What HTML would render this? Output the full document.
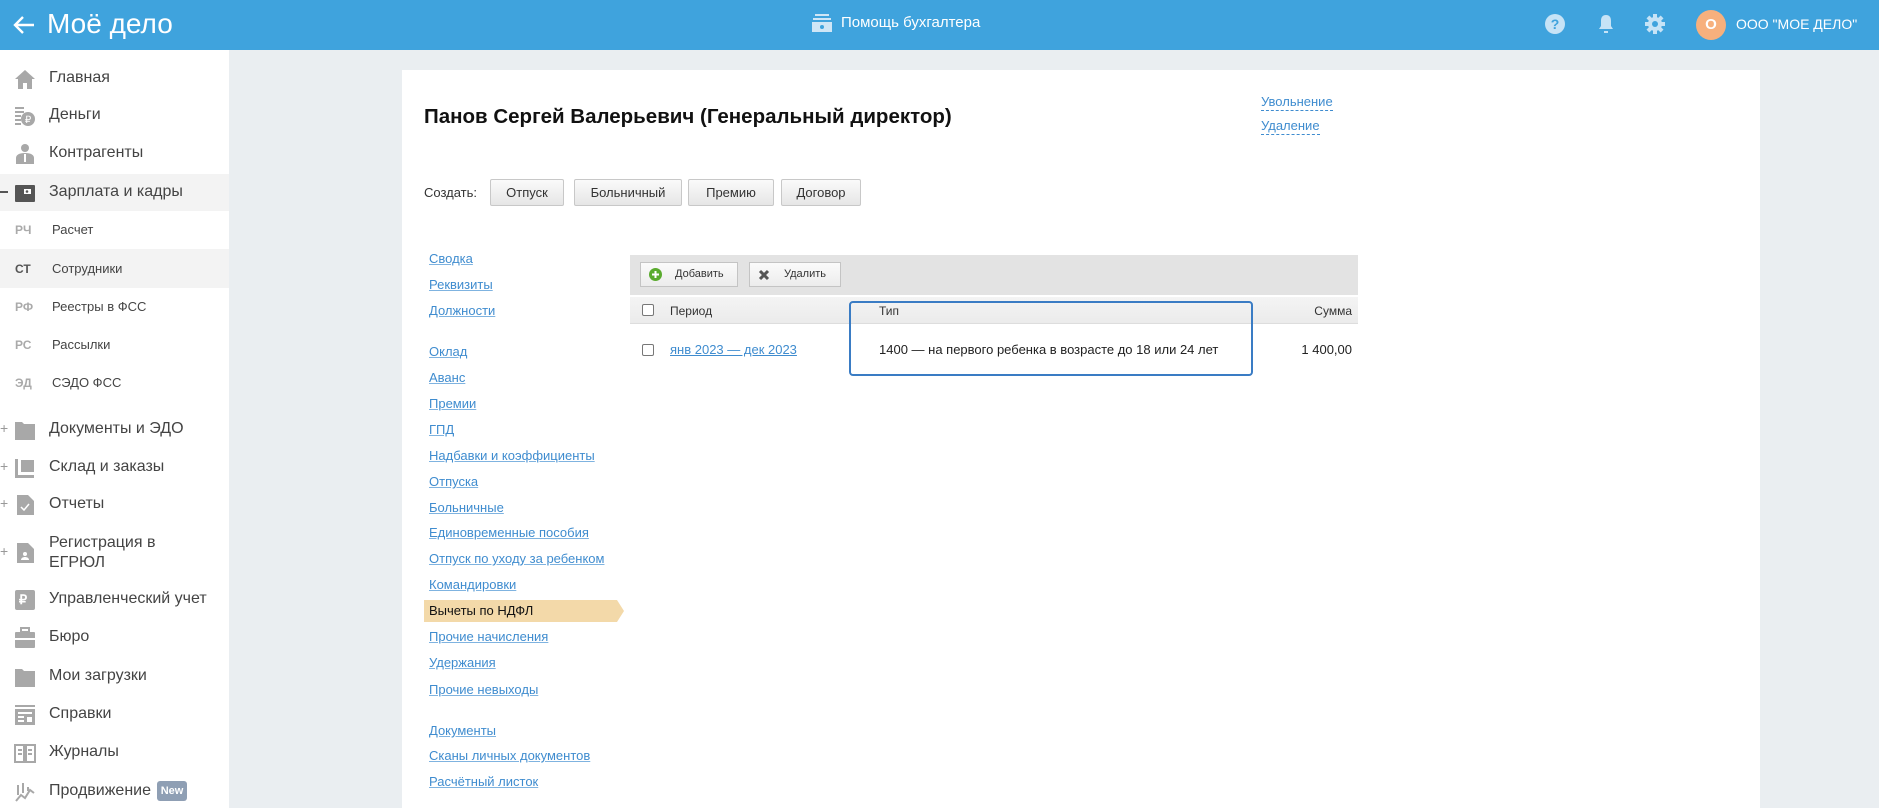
<!DOCTYPE html>
<html><head><meta charset="utf-8"><style>
*{margin:0;padding:0;box-sizing:border-box}
body{width:1879px;height:808px;overflow:hidden;background:#eaeef1;font-family:"Liberation Sans",Arial,sans-serif;position:relative;color:#333}
.abs{position:absolute}
#hdr{left:0;top:0;width:1879px;height:50px;background:#3fa3dd}
#side{left:0;top:50px;width:229px;height:758px;background:#fff}
.it{position:absolute;left:49px;font-size:16px;color:#444;line-height:20px}
.ic{position:absolute;left:14px;width:22px;height:22px}
.sub{position:absolute;left:52px;font-size:13px;color:#444}
.ab{position:absolute;left:15px;font-size:12px;font-weight:bold;color:#aaa}
.pl{position:absolute;left:0;font-size:14px;color:#999}
#card{left:402px;top:70px;width:1358px;height:738px;background:#fff}
.nl{position:absolute;left:429px;font-size:13px;color:#3f8ccf;text-decoration:underline;text-decoration-color:#7fb3e0}
.btn{position:absolute;top:179px;height:27px;border:1px solid #c8c8c8;border-radius:2px;background:linear-gradient(#fafafa,#e6e6e6);font-size:13px;color:#333;text-align:center;line-height:25px}
.tb{position:absolute;top:262px;height:25px;border:1px solid #c4c4c4;background:linear-gradient(#fbfbfb,#ececec);font-size:11px;color:#333;line-height:23px}
.cb{position:absolute;width:12px;height:12px;border:1px solid #777;border-radius:2px;background:#fff}
</style></head><body>
<div id="hdr" class="abs">
 <svg class="abs" style="left:12px;top:13px" width="24" height="24" viewBox="0 0 24 24"><path d="M22 12H3M11 4l-8 8 8 8" stroke="#fff" stroke-width="2.4" fill="none"/></svg>
 <div class="abs" style="left:47px;top:8px;font-size:28px;color:#fff">Моё дело</div>
 <svg class="abs" style="left:811px;top:13px" width="22" height="20" viewBox="0 0 22 20"><rect x="4" y="1" width="14" height="2" fill="#cfe6f6"/><rect x="2" y="5" width="18" height="2" fill="#cfe6f6"/><rect x="1" y="9" width="20" height="10" fill="#cfe6f6"/><circle cx="11" cy="14" r="2" fill="#3fa3dd"/></svg>
 <div class="abs" style="left:841px;top:14px;font-size:15px;color:#fff">Помощь бухгалтера</div>
 <svg class="abs" style="left:1544px;top:13px" width="22" height="22"><circle cx="11" cy="11" r="10" fill="#c6e3f6"/><text x="11" y="16" font-size="14" font-weight="bold" text-anchor="middle" fill="#3fa3dd" font-family="Liberation Sans">?</text></svg>
 <svg class="abs" style="left:1596px;top:13px" width="20" height="22" viewBox="0 0 20 22"><path d="M10 2c-4 0-5 3-5 6v5l-2 3h14l-2-3V8c0-3-1-6-5-6z" fill="#c6e3f6"/><rect x="8" y="18" width="4" height="2" fill="#c6e3f6"/></svg>
 <svg class="abs" style="left:1644px;top:13px" width="22" height="22" viewBox="0 0 22 22"><g fill="#c6e3f6"><circle cx="11" cy="11" r="7"/><rect x="9" y="1" width="4" height="20"/><rect x="1" y="9" width="20" height="4"/><rect x="9" y="1" width="4" height="20" transform="rotate(45 11 11)"/><rect x="9" y="1" width="4" height="20" transform="rotate(-45 11 11)"/></g><circle cx="11" cy="11" r="3" fill="#3fa3dd"/></svg>
 <div class="abs" style="left:1696px;top:10px;width:30px;height:30px;border-radius:50%;background:#f7b07d;color:#fff;font-weight:bold;font-size:15px;text-align:center;line-height:30px">О</div>
 <div class="abs" style="left:1736px;top:16px;font-size:14px;color:#fff">ООО "МОЕ ДЕЛО"</div>
</div>
<div id="side" class="abs"></div>
<div class="abs" style="left:0;top:174px;width:229px;height:37px;background:#f3f3f3"></div>
<div class="abs" style="left:0;top:249px;width:229px;height:39px;background:#f3f3f3"></div>
<svg class="ic" style="top:68px" viewBox="0 0 22 22"><path d="M11 2L1 11h3v10h5v-6h4v6h5V11h3z" fill="#a8a8a8"/></svg>
<svg class="ic" style="top:105px" viewBox="0 0 22 22"><g fill="#a8a8a8"><rect x="1" y="2" width="9" height="2"/><rect x="1" y="6" width="9" height="2"/><rect x="1" y="10" width="6" height="2"/><rect x="1" y="14" width="6" height="2"/><rect x="1" y="18" width="6" height="2"/><circle cx="14" cy="14" r="7"/></g><text x="14" y="18" font-size="10" fill="#fff" text-anchor="middle" font-family="Liberation Sans">₽</text></svg>
<svg class="ic" style="top:143px" viewBox="0 0 22 22"><g fill="#a8a8a8"><circle cx="11" cy="5" r="4"/><path d="M2 21v-6c0-3 3-5 9-5s9 2 9 5v6z"/></g><rect x="10" y="11" width="2" height="8" fill="#fff"/></svg>
<svg class="ic" style="top:182px" viewBox="0 0 22 22"><rect x="1" y="3" width="20" height="17" rx="1" fill="#555"/><rect x="10" y="7" width="7" height="5" fill="#fff"/><circle cx="13" cy="9.5" r="1.3" fill="#555"/></svg>
<div class="abs" style="left:0;top:191px;width:8px;height:2px;background:#555"></div>
<div class="it" style="top:68px">Главная</div>
<div class="it" style="top:105px">Деньги</div>
<div class="it" style="top:143px">Контрагенты</div>
<div class="it" style="top:182px">Зарплата и кадры</div>
<div class="ab" style="top:223px">РЧ</div><div class="sub" style="top:222px">Расчет</div>
<div class="ab" style="top:262px;color:#555">СТ</div><div class="sub" style="top:261px">Сотрудники</div>
<div class="ab" style="top:300px">РФ</div><div class="sub" style="top:299px">Реестры в ФСС</div>
<div class="ab" style="top:338px">РС</div><div class="sub" style="top:337px">Рассылки</div>
<div class="ab" style="top:376px">ЭД</div><div class="sub" style="top:375px">СЭДО ФСС</div>
<svg class="ic" style="top:419px" viewBox="0 0 22 22"><path d="M1 3h7l2 2h11v16H1z" fill="#a8a8a8"/></svg>
<svg class="ic" style="top:457px" viewBox="0 0 22 22"><path d="M1 2h3v16h16v3H1z M7 3h13v12H7z" fill="#a8a8a8"/></svg>
<svg class="ic" style="top:494px" viewBox="0 0 22 22"><path d="M3 1h11l6 6v14H3z" fill="#a8a8a8"/><path d="M7 13l3 3 5-6" stroke="#fff" stroke-width="1.5" fill="none"/></svg>
<svg class="ic" style="top:542px" viewBox="0 0 22 22"><path d="M3 1h11l6 6v14H3z" fill="#a8a8a8"/><circle cx="11" cy="12" r="2" fill="#fff"/><path d="M7 18c0-2 2-3 4-3s4 1 4 3z" fill="#fff"/></svg>
<svg class="ic" style="top:589px" viewBox="0 0 22 22"><rect x="1" y="1" width="20" height="20" rx="2" fill="#a8a8a8"/><text x="9" y="15" font-size="13" font-weight="bold" fill="#fff" text-anchor="middle" font-family="Liberation Sans">₽</text></svg>
<svg class="ic" style="top:627px" viewBox="0 0 22 22"><rect x="7" y="1" width="8" height="4" fill="none" stroke="#a8a8a8" stroke-width="2"/><rect x="1" y="5" width="20" height="16" rx="1" fill="#a8a8a8"/><rect x="1" y="11" width="20" height="2" fill="#fff"/></svg>
<svg class="ic" style="top:666px" viewBox="0 0 22 22"><path d="M1 3h7l2 2h11v16H1z" fill="#a8a8a8"/></svg>
<svg class="ic" style="top:704px" viewBox="0 0 22 22"><rect x="1" y="1" width="20" height="2" fill="#a8a8a8"/><rect x="1" y="5" width="20" height="16" fill="#a8a8a8"/><g fill="#fff"><rect x="4" y="8" width="14" height="2"/><rect x="4" y="12" width="6" height="2"/><rect x="4" y="16" width="6" height="2"/><rect x="13" y="13" width="5" height="5"/></g></svg>
<svg class="ic" style="top:742px" viewBox="0 0 22 22"><path d="M1 3h9v17H1zM12 3h9v17h-9z" fill="none" stroke="#a8a8a8" stroke-width="2"/><g fill="#a8a8a8"><rect x="4" y="7" width="4" height="2"/><rect x="4" y="11" width="4" height="2"/><rect x="14" y="7" width="4" height="2"/><rect x="14" y="11" width="4" height="2"/></g></svg>
<svg class="ic" style="top:781px" viewBox="0 0 22 22"><path d="M2 20l5-6 4 3 5-8 4 3" stroke="#a8a8a8" stroke-width="2" fill="none"/><path d="M4 4v10M9 2v10M14 6v4" stroke="#a8a8a8" stroke-width="2"/></svg>
<div class="pl" style="top:420px">+</div><div class="pl" style="top:458px">+</div><div class="pl" style="top:495px">+</div><div class="pl" style="top:543px">+</div>
<div class="it" style="top:419px">Документы и ЭДО</div>
<div class="it" style="top:457px">Склад и заказы</div>
<div class="it" style="top:494px">Отчеты</div>
<div class="it" style="top:533px">Регистрация в<br>ЕГРЮЛ</div>
<div class="it" style="top:589px">Управленческий учет</div>
<div class="it" style="top:627px">Бюро</div>
<div class="it" style="top:666px">Мои загрузки</div>
<div class="it" style="top:704px">Справки</div>
<div class="it" style="top:742px">Журналы</div>
<div class="it" style="top:781px">Продвижение</div>
<div class="abs" style="left:157px;top:781px;width:30px;height:20px;border-radius:3px;background:#8f9fb4;color:#fff;font-size:11px;font-weight:bold;text-align:center;line-height:20px">New</div>

<div id="card" class="abs"></div>
<div class="abs" style="left:424px;top:105px;font-size:20.5px;font-weight:bold;color:#111">Панов Сергей Валерьевич (Генеральный директор)</div>
<div class="abs" style="left:1261px;top:94px;font-size:13px;color:#3f8ccf;border-bottom:1px dashed #3f8ccf;line-height:16px">Увольнение</div>
<div class="abs" style="left:1261px;top:118px;font-size:13px;color:#3f8ccf;border-bottom:1px dashed #3f8ccf;line-height:16px">Удаление</div>
<div class="abs" style="left:424px;top:185px;font-size:13px;color:#333">Создать:</div>
<div class="btn" style="left:490px;width:74px">Отпуск</div>
<div class="btn" style="left:574px;width:108px">Больничный</div>
<div class="btn" style="left:688px;width:86px">Премию</div>
<div class="btn" style="left:781px;width:80px">Договор</div>

<div class="abs" style="left:424px;top:600px;width:192px;height:22px;background:#f3d9a9"></div>
<svg class="abs" style="left:616px;top:600px" width="9" height="22"><path d="M0 0h1l7 11-7 11H0z" fill="#f3d9a9"/></svg>
<div class="nl" style="top:251px">Сводка</div>
<div class="nl" style="top:277px">Реквизиты</div>
<div class="nl" style="top:303px">Должности</div>
<div class="nl" style="top:344px">Оклад</div>
<div class="nl" style="top:370px">Аванс</div>
<div class="nl" style="top:396px">Премии</div>
<div class="nl" style="top:422px">ГПД</div>
<div class="nl" style="top:448px">Надбавки и коэффициенты</div>
<div class="nl" style="top:474px">Отпуска</div>
<div class="nl" style="top:500px">Больничные</div>
<div class="nl" style="top:525px">Единовременные пособия</div>
<div class="nl" style="top:551px">Отпуск по уходу за ребенком</div>
<div class="nl" style="top:577px">Командировки</div>
<div class="nl" style="top:603px;color:#111;text-decoration:none">Вычеты по НДФЛ</div>
<div class="nl" style="top:629px">Прочие начисления</div>
<div class="nl" style="top:655px">Удержания</div>
<div class="nl" style="top:682px">Прочие невыходы</div>
<div class="nl" style="top:723px">Документы</div>
<div class="nl" style="top:748px">Сканы личных документов</div>
<div class="nl" style="top:774px">Расчётный листок</div>

<div class="abs" style="left:630px;top:255px;width:728px;height:40px;background:#e3e3e3"></div>
<div class="tb" style="left:640px;width:98px"><svg style="position:absolute;left:8px;top:5px" width="13" height="13"><circle cx="6.5" cy="6.5" r="6.5" fill="#5aab2e"/><path d="M6.5 3v7M3 6.5h7" stroke="#fff" stroke-width="2"/></svg><span style="position:absolute;left:34px">Добавить</span></div>
<div class="tb" style="left:749px;width:92px"><svg style="position:absolute;left:8px;top:6px" width="12" height="12"><path d="M2 2l8 8M10 2l-8 8" stroke="#555" stroke-width="3"/></svg><span style="position:absolute;left:34px">Удалить</span></div>
<div class="abs" style="left:630px;top:296px;width:728px;height:28px;background:linear-gradient(#f4f4f4,#ebebeb);border-top:1px solid #fff;border-bottom:1px solid #ddd"></div>
<div class="cb" style="left:642px;top:304px"></div>
<div class="abs" style="left:670px;top:304px;font-size:12px;color:#333">Период</div>
<div class="abs" style="left:879px;top:304px;font-size:12px;color:#333">Тип</div>
<div class="abs" style="left:1300px;top:304px;width:52px;text-align:right;font-size:12px;color:#333">Сумма</div>
<div class="cb" style="left:642px;top:344px"></div>
<div class="abs" style="left:670px;top:342px;font-size:13px;color:#3f8ccf;text-decoration:underline">янв 2023 — дек 2023</div>
<div class="abs" style="left:879px;top:342px;font-size:13px;color:#222">1400 — на первого ребенка в возрасте до 18 или 24 лет</div>
<div class="abs" style="left:1280px;top:342px;width:72px;text-align:right;font-size:13px;color:#222">1 400,00</div>
<div class="abs" style="left:849px;top:301px;width:404px;height:75px;border:2.5px solid #3a7cc4;border-radius:4px"></div>
</body></html>
